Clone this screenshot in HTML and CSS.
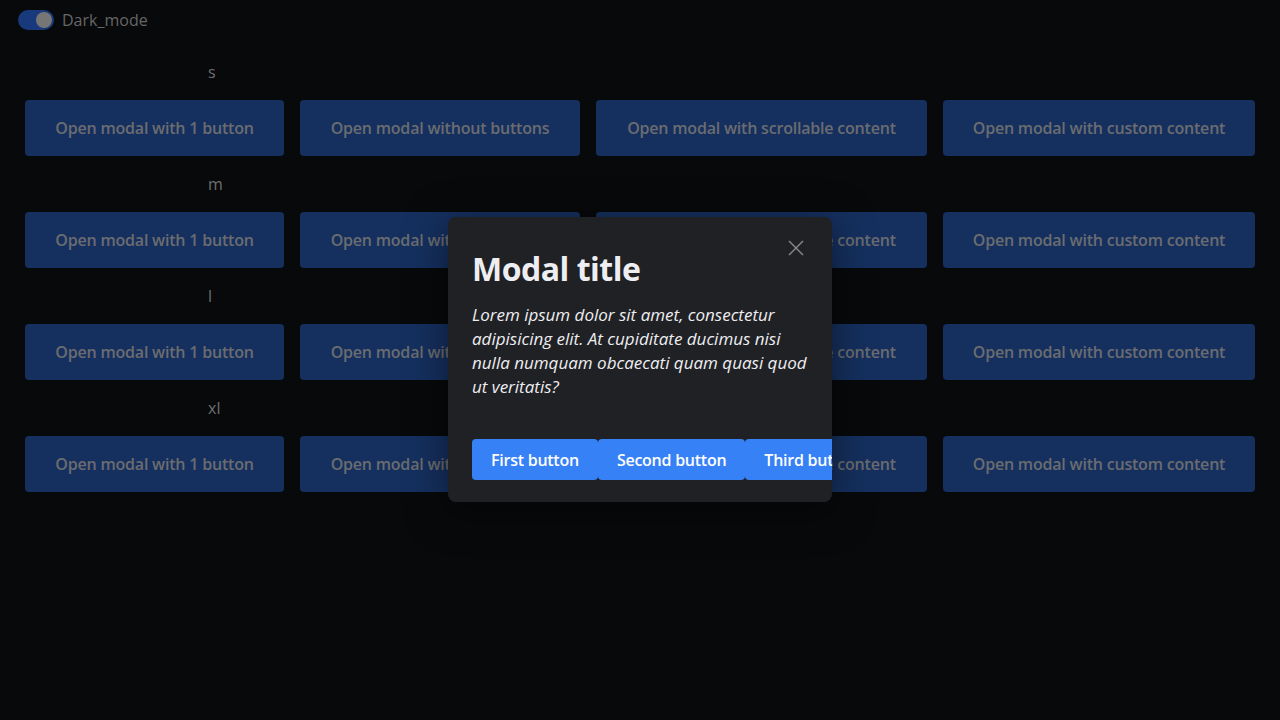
FILE: index.html
```html
<!DOCTYPE html>
<html>
<head>
<meta charset="utf-8">
<link rel="stylesheet" href="styles.css">
</head>
<body>
<div class="topbar">
  <span class="toggle"><span class="knob"></span></span>
  <span class="toggle-label">Dark_mode</span>
</div>
<main class="page">
  <section class="group">
    <div class="size-label">s</div>
    <div class="row">
      <button class="open-btn w1">Open modal with 1 button</button>
      <button class="open-btn w2">Open modal without buttons</button>
      <button class="open-btn w3">Open modal with scrollable content</button>
      <button class="open-btn w4">Open modal with custom content</button>
    </div>
  </section>
  <section class="group">
    <div class="size-label">m</div>
    <div class="row">
      <button class="open-btn w1">Open modal with 1 button</button>
      <button class="open-btn w2">Open modal without buttons</button>
      <button class="open-btn w3">Open modal with scrollable content</button>
      <button class="open-btn w4">Open modal with custom content</button>
    </div>
  </section>
  <section class="group">
    <div class="size-label">l</div>
    <div class="row">
      <button class="open-btn w1">Open modal with 1 button</button>
      <button class="open-btn w2">Open modal without buttons</button>
      <button class="open-btn w3">Open modal with scrollable content</button>
      <button class="open-btn w4">Open modal with custom content</button>
    </div>
  </section>
  <section class="group">
    <div class="size-label">xl</div>
    <div class="row">
      <button class="open-btn w1">Open modal with 1 button</button>
      <button class="open-btn w2">Open modal without buttons</button>
      <button class="open-btn w3">Open modal with scrollable content</button>
      <button class="open-btn w4">Open modal with custom content</button>
    </div>
  </section>
</main>
<div class="modal" role="dialog">
  <button class="close" aria-label="Close">
    <svg width="16" height="16" viewBox="0 0 16 16"><path d="M1 1 L15 15 M15 1 L1 15" stroke="#8a8b90" stroke-width="1.4" fill="none"/></svg>
  </button>
  <h2 class="modal-title">Modal title</h2>
  <p class="modal-body">Lorem ipsum dolor sit amet, consectetur adipisicing elit. At cupiditate ducimus nisi nulla numquam obcaecati quam quasi quod ut veritatis?</p>
  <div class="modal-actions">
    <button class="action">First button</button>
    <button class="action">Second button</button>
    <button class="action">Third button</button>
  </div>
</div>
</body>
</html>
```
FILE: styles.css
```css
* { box-sizing: border-box; }
html, body { margin: 0; height: 100%; }
body {
  background: #08090b;
  font-family: "Open Sans", "Noto Sans", sans-serif;
  color: #6c6c6c;
  position: relative;
  overflow: hidden;
}
.topbar {
  display: flex;
  align-items: center;
  gap: 8px;
  padding: 10px 0 0 18px;
  height: 30px;
}
.toggle {
  width: 36px;
  height: 20px;
  border-radius: 10px;
  background: #183a7c;
  display: flex;
  align-items: center;
  justify-content: flex-end;
  padding: 0 2px;
}
.knob {
  width: 16px;
  height: 16px;
  border-radius: 50%;
  background: #767676;
}
.toggle-label {
  font-size: 16px;
  color: #666;
}
.page {
  padding: 30px 25px 0 25px;
}
.group {
  display: flex;
  flex-direction: column;
}
.size-label {
  padding-left: 183px;
  height: 40px;
  line-height: 24px;
  padding-top: 0;
  font-size: 16px;
  color: #6f6f6f;
}
.row {
  display: flex;
  gap: 16px;
  margin-bottom: 16px;
}
.open-btn {
  height: 56px;
  border: none;
  border-radius: 4px;
  background: #15305f;
  color: #6b6c70;
  font-family: "Open Sans", "Noto Sans", sans-serif;
  font-weight: 600;
  font-size: 16px;
  letter-spacing: -0.2px;
  padding: 0;
}
.w1 { width: 259px; }
.w2 { width: 280px; }
.w3 { width: 331px; }
.w4 { flex: 1; }

.modal {
  position: absolute;
  left: 448px;
  top: 217px;
  width: 384px;
  height: 285px;
  background: #202124;
  border-radius: 8px;
  padding: 32px 24px 22px 24px;
  overflow: hidden;
  box-shadow: 0 8px 40px rgba(0,0,0,0.5);
}
.close {
  position: absolute;
  right: 28px;
  top: 23px;
  width: 16px;
  height: 16px;
  margin: 0;
  padding: 0;
  border: none;
  background: none;
}
.close svg { display: block; }
.modal-title {
  margin: 0;
  font-size: 32px;
  line-height: 40px;
  font-weight: 700;
  color: #eeeef2;
  letter-spacing: -0.5px;
}
.modal-body {
  margin: 14px 0 0 0;
  font-size: 17px;
  line-height: 24px;
  font-style: italic;
  color: #eeeef2;
}
.modal-actions {
  display: flex;
  margin-top: 40px;
}
.action {
  flex: none;
  height: 41px;
  padding: 0 19px;
  border: none;
  border-radius: 4px;
  background: #3781f7;
  color: #fff;
  font-family: "Open Sans", "Noto Sans", sans-serif;
  font-weight: 600;
  font-size: 16px;
  letter-spacing: -0.25px;
}
```
